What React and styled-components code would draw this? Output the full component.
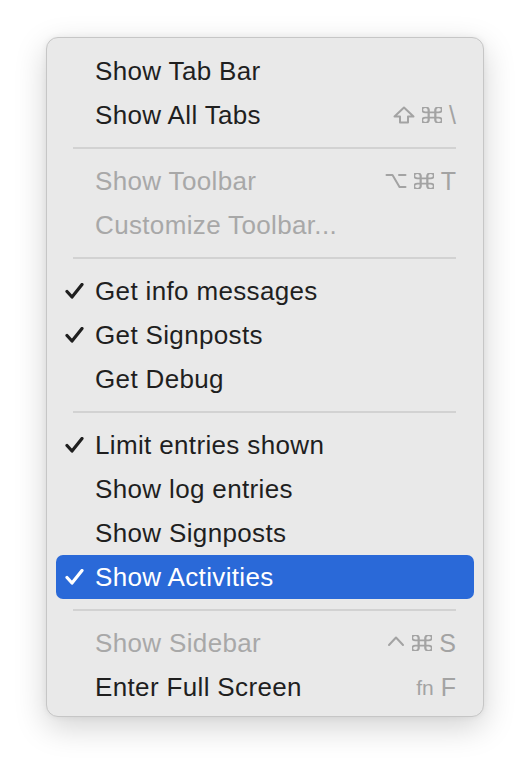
import React from 'react';
import styled, { createGlobalStyle } from 'styled-components';

const GlobalStyle = createGlobalStyle`
  body {
    margin: 0;
    background: #ffffff;
    font-family: "Liberation Sans", Arial, sans-serif;
  }
`;

const Page = styled.div`
  display: flex;
  padding: 37px 0 0 46px;
  height: 772px;
  box-sizing: border-box;
`;

const Menu = styled.div`
  width: 438px;
  box-sizing: border-box;
  background: #e9e9e9;
  border: 1px solid #c6c6c6;
  border-radius: 12px;
  box-shadow: 0 10px 32px rgba(0, 0, 0, 0.18), 0 0 6px rgba(0, 0, 0, 0.06);
  padding: 11px 9px 7px 9px;
  display: flex;
  flex-direction: column;
  align-self: flex-start;
`;

const Row = styled.div`
  height: 44px;
  display: flex;
  align-items: center;
  padding: 0 18px 0 9px;
  border-radius: 7px;
  font-size: 26px;
  letter-spacing: 0.35px;
  color: ${p => (p.$active ? '#ffffff' : p.$disabled ? '#a8a8a8' : '#1f1f1f')};
  background: ${p => (p.$active ? '#2a69d8' : 'transparent')};
`;

const CheckSlot = styled.div`
  width: 30px;
  display: flex;
  align-items: center;
`;

const Label = styled.span`
  flex: 1;
  white-space: nowrap;
`;

const Shortcut = styled.span`
  display: flex;
  align-items: center;
  gap: 7px;
  color: ${p => (p.$active ? '#ffffff' : '#a3a3a3')};
  font-size: 25px;
  letter-spacing: 0;
  svg {
    display: block;
  }
`;

const Fn = styled.span`
  font-size: 21px;
  margin-top: 2px;
`;

const Separator = styled.div`
  height: 22px;
  display: flex;
  align-items: center;
  padding: 0 18px 0 17px;
  &::after {
    content: '';
    flex: 1;
    height: 2px;
    background: #d2d2d2;
  }
`;

const Check = ({ color }) => (
  <svg width="19" height="16" viewBox="0 0 19 16">
    <path d="M2 8.5 L7 14 L17 1.5" fill="none" stroke={color} strokeWidth="3.2" strokeLinecap="round" strokeLinejoin="round" />
  </svg>
);

const stroke = { fill: 'none', stroke: 'currentColor', strokeLinecap: 'round', strokeLinejoin: 'round' };

const ShiftKey = () => (
  <svg width="22" height="18" viewBox="0 0 22 18">
    <path d="M11 1.5 L20.5 10.5 H15 V16.5 H7 V10.5 H1.5 Z" {...stroke} strokeWidth="2" />
  </svg>
);

const CmdKey = () => (
  <svg width="20" height="16" viewBox="3 3 18 18" preserveAspectRatio="none">
    <path d="M15 6v12a3 3 0 1 0 3-3H6a3 3 0 1 0 3 3V6a3 3 0 1 0-3 3h12a3 3 0 1 0-3-3" {...stroke} strokeWidth="2" />
  </svg>
);

const OptKey = () => (
  <svg width="22" height="16" viewBox="0 0 22 16">
    <path d="M1.5 2 H7.5 L14.5 14 H20.5 M14 2 H20.5" {...stroke} strokeWidth="2" />
  </svg>
);

const CtrlKey = () => (
  <svg width="18" height="18" viewBox="0 0 18 18">
    <path d="M2 11 L9 3.5 L16 11" {...stroke} strokeWidth="2" />
  </svg>
);

const Item = ({ label, checked, disabled, active, children }) => (
  <Row $disabled={disabled} $active={active}>
    <CheckSlot>{checked && <Check color={active ? '#ffffff' : '#1f1f1f'} />}</CheckSlot>
    <Label>{label}</Label>
    {children && <Shortcut $active={active}>{children}</Shortcut>}
  </Row>
);

const App = () => {
  return (
    <Page>
      <GlobalStyle />
      <Menu>
        <Item label="Show Tab Bar" />
        <Item label="Show All Tabs">
          <ShiftKey />
          <CmdKey />
          <span>\</span>
        </Item>
        <Separator />
        <Item label="Show Toolbar" disabled>
          <OptKey />
          <CmdKey />
          <span>T</span>
        </Item>
        <Item label="Customize Toolbar..." disabled />
        <Separator />
        <Item label="Get info messages" checked />
        <Item label="Get Signposts" checked />
        <Item label="Get Debug" />
        <Separator />
        <Item label="Limit entries shown" checked />
        <Item label="Show log entries" />
        <Item label="Show Signposts" />
        <Item label="Show Activities" checked active />
        <Separator />
        <Item label="Show Sidebar" disabled>
          <CtrlKey />
          <CmdKey />
          <span>S</span>
        </Item>
        <Item label="Enter Full Screen">
          <Fn>fn</Fn>
          <span>F</span>
        </Item>
      </Menu>
    </Page>
  );
};

export default App;
